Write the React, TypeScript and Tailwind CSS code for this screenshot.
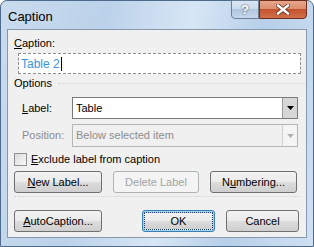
import React from "react";

const font = { fontFamily: '"Liberation Sans", Arial, sans-serif' };

function Btn({ children, w, disabled, def }: { children: React.ReactNode; w: string; disabled?: boolean; def?: boolean }) {
  return (
    <div
      className={`${w} h-[22px] rounded-[3px] border flex items-center justify-center text-[11px] ${
        disabled
          ? "border-[#adb2b5] bg-[#f4f4f4] text-[#a3a3a3]"
          : def
          ? "border-[#3c7fb1] bg-[#9fd3f2] text-black p-[1px]"
          : "border-[#707070] bg-[linear-gradient(#f2f2f2_0%,#ebebeb_50%,#dddddd_50%,#cfcfcf_100%)] text-black"
      }`}
    >
      {def ? (
        <div className="w-full h-full border border-dotted border-[#1a3a6a] rounded-[1px] flex items-center justify-center bg-[linear-gradient(#f2f2f2_0%,#ebebeb_50%,#dddddd_50%,#cfcfcf_100%)]">
          {children}
        </div>
      ) : (
        children
      )}
    </div>
  );
}

export default function App() {
  return (
    <div style={font} className="w-[314px] h-[247px] relative overflow-hidden bg-white">
      <div className="w-[314px] h-[247px] rounded-t-[7px] border border-[#4d6a8a] bg-[linear-gradient(100deg,#c9dbee_0%,#bcd2ea_30%,#d7e6f5_55%,#b7cfe9_75%,#cfe0f2_100%)] flex flex-col">
        <div className="h-[28px] flex items-start relative">
          <span className="ml-[7px] mt-[6px] text-[13px] text-black">Caption</span>
          <div className="absolute right-[6px] top-[-1px] flex">
            <div className="w-[28px] h-[19px] border border-[#6b7f99] rounded-bl-[4px] bg-[linear-gradient(#dbe6f3_0%,#c9d9ec_50%,#b1c6df_50%,#c6d7ec_100%)] flex items-center justify-center text-white font-bold text-[13px]" style={{ textShadow: "0 0 2px #333" }}>
              ?
            </div>
            <div className="w-[48px] h-[19px] border border-[#6e2e1e] rounded-br-[4px] bg-[linear-gradient(#e8a68c_0%,#d98c6d_50%,#c3532e_50%,#d1704b_100%)] flex items-center justify-center">
              <svg width="14" height="11" viewBox="0 0 14 11">
                <path d="M2 1.5 L12 9.5 M12 1.5 L2 9.5" stroke="#5a2a1a" strokeWidth="4" strokeLinecap="square" />
                <path d="M2 1.5 L12 9.5 M12 1.5 L2 9.5" stroke="#fff" strokeWidth="2.4" strokeLinecap="square" />
              </svg>
            </div>
          </div>
        </div>
        <div className="mx-[6px] h-[209px] border border-[#8698ae] bg-[#f0f0f0] text-[11px] text-black flex flex-col">
          <div className="ml-[6px] mt-[7px] leading-[13px]"><u>C</u>aption:</div>
          <div className="ml-[10px] mt-[3px] w-[283px] h-[21px] border border-dashed border-[#8e8e8e] bg-white flex items-center pl-[2px]">
            <span className="text-[#3c93d8] text-[12px]">Table 2</span>
            <span className="w-[1px] h-[14px] bg-black ml-[1px]" />
          </div>
          <div className="ml-[6px] mt-[3px] flex items-center h-[13px]">
            <span>Options</span>
            <div className="flex-1 ml-[6px] border-t border-dotted border-[#c8d4e0]" />
          </div>
          <div className="mt-[7px] flex items-center h-[22px]">
            <span className="ml-[14px] w-[50px]"><u>L</u>abel:</span>
            <div className="w-[226px] h-[22px] border border-[#7a7a7a] bg-white flex items-center">
              <span className="ml-[3px] flex-1">Table</span>
              <div className="w-[15px] h-[20px] bg-[#d6d6d6] border-l border-[#9a9a9a] flex items-center justify-center">
                <svg width="7" height="4" viewBox="0 0 7 4"><path d="M0 0H7L3.5 4Z" fill="#000" /></svg>
              </div>
            </div>
          </div>
          <div className="mt-[5px] flex items-center h-[23px] text-[#8d8d8d]">
            <span className="ml-[14px] w-[50px]">Position:</span>
            <div className="w-[226px] h-[23px] border border-[#b5b5b5] bg-[#f0f0f0] flex items-center">
              <span className="ml-[3px] flex-1">Below selected item</span>
              <div className="w-[15px] h-[21px] bg-[#f4f4f4] border-l border-[#d0d0d0] flex items-center justify-center">
                <svg width="7" height="4" viewBox="0 0 7 4"><path d="M0 0H7L3.5 4Z" fill="#b0b0b0" /></svg>
              </div>
            </div>
          </div>
          <div className="mt-[6px] ml-[6px] flex items-center h-[13px]">
            <div className="w-[13px] h-[13px] border border-[#8f8f8f] bg-[linear-gradient(135deg,#dcdcdc,#f8f8f8)]" />
            <span className="ml-[4px]"><u>E</u>xclude label from caption</span>
          </div>
          <div className="mt-[5px] ml-[6px] flex gap-[11px]">
            <Btn w="w-[88px]"><span><u>N</u>ew Label...</span></Btn>
            <Btn w="w-[86px]" disabled>Delete Label</Btn>
            <Btn w="w-[87px]"><span>N<u>u</u>mbering...</span></Btn>
          </div>
          <div className="mt-[3px] mx-[6px] border-t border-dotted border-[#c8d4e0]" />
          <div className="mt-[13px] ml-[6px] flex">
            <Btn w="w-[88px]"><span><u>A</u>utoCaption...</span></Btn>
            <div className="ml-[40px]">
              <Btn w="w-[73px]" def>OK</Btn>
            </div>
            <div className="ml-[11px]">
              <Btn w="w-[73px]">Cancel</Btn>
            </div>
          </div>
        </div>
      </div>
    </div>
  );
}
